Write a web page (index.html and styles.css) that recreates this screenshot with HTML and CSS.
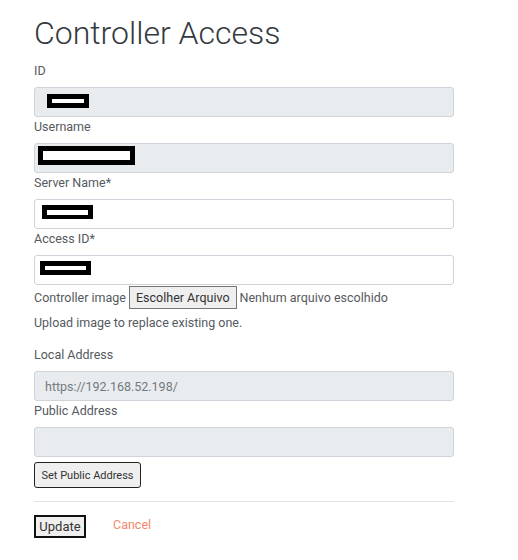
FILE: index.html
```html
<!DOCTYPE html>
<html>
<head>
<meta charset="utf-8">
<link rel="stylesheet" href="styles.css">
</head>
<body>
<div class="page">
  <h1 class="title">Controller Access</h1>

  <label class="label">ID</label>
  <div class="input disabled"><span class="redact r-id"></span></div>

  <label class="label">Username</label>
  <div class="input disabled"><span class="redact r-user"></span></div>

  <label class="label">Server Name*</label>
  <div class="input"><span class="redact r-server"></span></div>

  <label class="label">Access ID*</label>
  <div class="input"><span class="redact r-access"></span></div>

  <div class="file-row">
    <span>Controller image</span>
    <button class="file-btn">Escolher Arquivo</button>
    <span>Nenhum arquivo escolhido</span>
  </div>
  <p class="help">Upload image to replace existing one.</p>

  <label class="label label-local">Local Address</label>
  <div class="input disabled text">https://192.168.52.198/</div>

  <label class="label">Public Address</label>
  <div class="input disabled"></div>

  <button class="btn-set">Set Public Address</button>

  <hr class="divider">

  <div class="actions">
    <button class="btn-update">Update</button>
    <a class="cancel">Cancel</a>
  </div>
</div>
</body>
</html>
```

FILE: styles.css
```css
html, body {
  margin: 0;
  padding: 0;
  background: #fff;
}
body {
  font-family: Roboto, "Liberation Sans", sans-serif;
  font-size: 12.5px;
  color: #555a60;
}
.page {
  width: 420px;
  margin-left: 34px;
}
.title {
  margin: 14px 0 8.6px 0;
  font-size: 32px;
  font-weight: 300;
  line-height: 38.4px;
  color: #343a40;
}
.label {
  display: block;
  line-height: 20px;
  margin-bottom: 6px;
  color: #555a60;
}
.input {
  box-sizing: border-box;
  height: 30px;
  width: 420px;
  border: 1px solid #ced4da;
  border-radius: 3px;
  background: #fff;
  display: flex;
  align-items: flex-start;
}
.input.disabled {
  background: #e9ecef;
}
.input.text {
  align-items: center;
  padding-left: 10px;
  color: #737980;
}
.redact {
  display: inline-block;
  box-sizing: border-box;
  border: 5px solid #000;
  background: #fff;
}
.r-id { width: 42px; height: 14px; margin: 6px 0 0 12px; }
.r-user { width: 97px; height: 19px; margin: 2px 0 0 3px; }
.r-server { width: 51px; height: 14px; margin: 5px 0 0 7px; border-width: 5px 5px 4px 5px; }
.r-access { width: 51px; height: 14px; margin: 5px 0 0 5px; }
.file-row {
  display: flex;
  align-items: center;
  gap: 3px;
  margin-top: 1px;
  height: 23px;
  color: #555a60;
}
.file-btn {
  box-sizing: border-box;
  height: 23px;
  padding: 0 6px;
  font-family: Roboto, "Liberation Sans", sans-serif;
  font-size: 12.5px;
  color: #333;
  background: #efefef;
  border: 1px solid #767676;
  border-radius: 0;
}
.help {
  margin: 4px 0 0 0;
  line-height: 20px;
  color: #555a60;
}
.label-local {
  margin-top: 12px;
}
.btn-set {
  display: block;
  box-sizing: border-box;
  margin-top: 5px;
  height: 26px;
  width: 107px;
  padding: 0;
  font-family: Roboto, "Liberation Sans", sans-serif;
  font-size: 11px;
  color: #333;
  background: #efefef;
  border: 1px solid #222;
  border-radius: 3px;
}
.divider {
  margin: 13px 0 13px 0;
  border: 0;
  border-top: 1px solid #e2e2e2;
  height: 0;
}
.actions {
  display: flex;
  align-items: flex-start;
  gap: 27px;
}
.btn-update {
  box-sizing: border-box;
  height: 23px;
  width: 52px;
  padding: 0;
  font-family: Roboto, "Liberation Sans", sans-serif;
  font-size: 13px;
  color: #333;
  background: #efefef;
  border: 2px solid #111;
  border-radius: 0;
}
.cancel {
  color: #f2876a;
  line-height: 20px;
  margin-top: 0;
}
```
